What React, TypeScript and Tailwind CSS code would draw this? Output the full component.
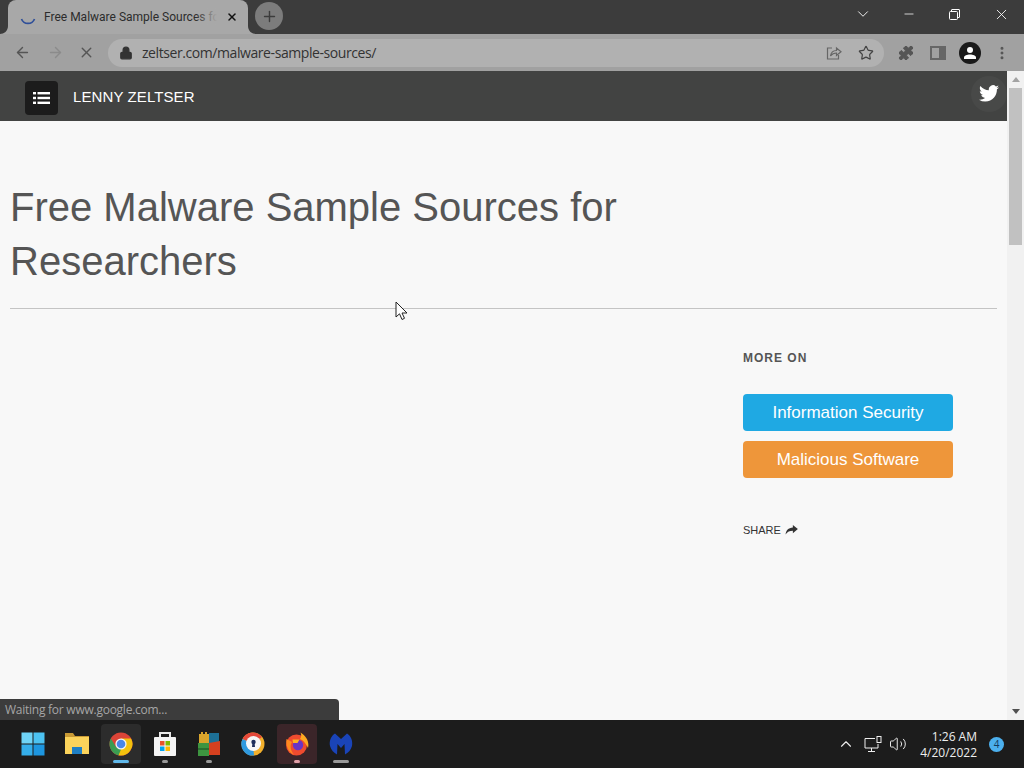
import { ArrowLeft, ArrowRight, X, Plus, ChevronDown, Minus, Lock, Star, Puzzle, MoreVertical, ChevronUp, Volume2 } from 'lucide-react';

function ChromeIcon() {
  return (
    <svg width="24" height="24" viewBox="0 0 24 24">
      <circle cx="12" cy="12" r="11.5" fill="#db4437" />
      <path d="M12 6.400 H22 A11.500 11.500 0 0 1 9.500 23.200 L12 12 Z" fill="#f4c20d" />
      <path d="M7 15 L1.900 6.400 A11.500 11.500 0 0 0 9.500 23.200 L12 17.600 Z" fill="#3a9c52" />
      <circle cx="12" cy="12" r="5.600" fill="#f4f4f4" />
      <circle cx="12" cy="12" r="4.300" fill="#4a86e8" />
    </svg>
  );
}

function WinLogo() {
  return (
    <svg width="24" height="24" viewBox="0 0 24 24">
      <rect x="0.500" y="0.500" width="11" height="11" fill="#6fd4f7" />
      <rect x="12.500" y="0.500" width="11" height="11" fill="#4cc2f1" />
      <rect x="0.500" y="12.500" width="11" height="11" fill="#35aeea" />
      <rect x="12.500" y="12.500" width="11" height="11" fill="#1d96e0" />
    </svg>
  );
}

function FolderIcon() {
  return (
    <svg width="26" height="24" viewBox="0 0 26 24">
      <path d="M1 1 H9 L11 4 H25 V22 H1 Z" fill="#c99a35" />
      <rect x="1" y="5" width="24" height="17" fill="#fbd35b" />
      <rect x="8" y="15" width="10" height="7" fill="#1f7fc4" />
    </svg>
  );
}

function StoreIcon() {
  return (
    <svg width="24" height="26" viewBox="0 0 24 26">
      <path d="M7 7 V2 H17 V7" fill="none" stroke="#e8e8e8" strokeWidth="2" />
      <rect x="1" y="6" width="22" height="19" rx="1" fill="#f4f4f4" />
      <rect x="7" y="10" width="4.500" height="4.500" fill="#e8532b" />
      <rect x="12.500" y="10" width="4.500" height="4.500" fill="#7fba00" />
      <rect x="7" y="15.500" width="4.500" height="4.500" fill="#00a4ef" />
      <rect x="12.500" y="15.500" width="4.500" height="4.500" fill="#ffb900" />
    </svg>
  );
}

function StackedAppIcon() {
  return (
    <svg width="24" height="26" viewBox="0 0 24 26">
      <path d="M2 3 H4 V1 H6 V3 H8 V1 H10 V3 H12 V12 H2 Z" fill="#d9a52c" />
      <rect x="1" y="12" width="11" height="13" fill="#3d9440" />
      <rect x="1" y="17" width="11" height="2" fill="#2a6f31" />
      <rect x="12" y="2" width="10" height="10" fill="#1d7096" />
      <path d="M12 12 L23 10 V24 H12 Z" fill="#d5401f" />
    </svg>
  );
}

function SecureBrowserIcon() {
  return (
    <svg width="24" height="24" viewBox="0 0 24 24">
      <circle cx="12" cy="12" r="11.500" fill="#f2b02c" />
      <path d="M12 12 L1.500 7 A11.500 11.500 0 0 1 21 5 Z" fill="#e5483a" />
      <path d="M12 12 L1.500 7 A11.500 11.500 0 0 0 13 23.500 Z" fill="#2f9ae0" />
      <circle cx="12.500" cy="11.500" r="7.500" fill="#f7f7f7" />
      <circle cx="12.500" cy="10" r="2.200" fill="#1f2f5c" />
      <path d="M11.500 10 H13.500 L14 15 H11 Z" fill="#1f2f5c" />
    </svg>
  );
}

function FirefoxIcon() {
  return (
    <svg width="24" height="24" viewBox="0 0 24 24">
      <circle cx="11.500" cy="13" r="10.500" fill="#ef4b2f" />
      <path d="M15.500 0.500 C21.500 4 24.500 10 23 16 C20.500 10.500 17.500 8 15 7 C16.500 5 16.500 3 15.500 0.500 Z" fill="#ffa921" />
      <path d="M1.500 7 C0.500 13 3 20 9 22.800 C5 18 5 13 7 10 Z" fill="#ff8a1f" />
      <circle cx="13" cy="13" r="5.200" fill="#6b34c4" />
      <path d="M7.500 7.500 H14.500 L12.500 11 H8 Z" fill="#ffb01f" />
    </svg>
  );
}

function MalwarebytesIcon() {
  return (
    <svg width="24" height="22" viewBox="0 0 24 22">
      <path d="M6 0.500 L12 6 L18 0.500 C22 3 24 8 23 13 C22 17 19 20 16 21.500 L15.500 11 L12 15 L8.500 11 L8 21.500 C5 20 2 17 1 13 C0 8 2 3 6 0.500 Z" fill="#1a44b8" />
    </svg>
  );
}

function TwitterIcon() {
  return (
    <svg width="20" height="17" viewBox="0 0 24 20" fill="#fff">
      <path d="M24 2.400c-.9.400-1.800.700-2.800.800 1-.600 1.800-1.600 2.200-2.700-1 .600-2 1-3.100 1.200A4.900 4.900 0 0 0 11.900 6.200C7.800 6 4.200 4 1.700.900c-1.300 2.200-.700 5.100 1.500 6.600-.800 0-1.600-.200-2.200-.600 0 2.300 1.600 4.400 3.900 4.900-.700.200-1.500.200-2.200.100.600 2 2.400 3.400 4.600 3.400A9.900 9.900 0 0 1 0 17.400 13.900 13.900 0 0 0 7.500 19.600c9.100 0 14.300-7.700 14-14.600 1-.700 1.800-1.600 2.500-2.600z" />
    </svg>
  );
}

function TaskItem({ active, barClass, children }: { active?: string; barClass?: string; children: React.ReactNode }) {
  return (
    <div className={`relative flex items-center justify-center w-10 h-10 rounded ${active ?? ''}`}>
      {children}
      {barClass && <span className={`absolute bottom-[1px] h-[3px] rounded-full ${barClass}`} />}
    </div>
  );
}

export default function App() {
  return (
    <div className="relative flex flex-col w-[1024px] h-[768px] overflow-hidden bg-[#f8f8f8] font-['Liberation_Sans',Arial,sans-serif]">
      {/* tab strip */}
      <div className="flex items-start h-[34px] bg-[#3c3c3c] shrink-0 pl-2">
        <div className="relative flex items-center w-[240px] h-[34px] rounded-t-lg bg-[#a8a8a8] pl-3 pr-2">
          <svg width="8" height="8" viewBox="0 0 8 8" className="absolute -left-2 bottom-0" fill="#a8a8a8">
            <path d="M8 0 V8 H0 C4 8 8 5 8 0 Z" />
          </svg>
          <svg width="8" height="8" viewBox="0 0 8 8" className="absolute -right-2 bottom-0" fill="#a8a8a8">
            <path d="M0 0 V8 H8 C4 8 0 5 0 0 Z" />
          </svg>
          <svg width="16" height="16" viewBox="0 0 16 16" className="mt-1 shrink-0">
            <path d="M1.500 8 A7 7 0 0 0 14.500 8" fill="none" stroke="#2f4f99" strokeWidth="1.700" />
          </svg>
          <div className="relative ml-2 w-[173px] overflow-hidden">
            <span className="block whitespace-nowrap text-[12px] text-[#2c2c2c] font-['Roboto',sans-serif]">Free Malware Sample Sources for Researchers</span>
            <div className="absolute right-0 top-0 h-full w-[22px] bg-gradient-to-r from-transparent to-[#a8a8a8]" />
          </div>
          <X className="ml-auto text-[#111] mr-[2px]" size={12} strokeWidth={3} />
        </div>
        <div className="ml-[7px] mt-[2px] flex items-center justify-center w-7 h-7 rounded-full bg-[#7c7c7c]">
          <Plus size={17} className="text-[#3c3c3c]" strokeWidth={2} />
        </div>
        <div className="ml-auto flex items-center h-[28px] text-white">
          <ChevronDown size={18} strokeWidth={1.200} className="mr-[30px]" />
          <Minus size={14} strokeWidth={1.300} className="mr-[33px]" />
          <svg width="11" height="11" viewBox="0 0 11 11" fill="none" stroke="#fff" className="mr-[33px]">
            <rect x="0.500" y="2.500" width="8" height="8" rx="1" />
            <path d="M2.500 2.500 V1 A0.500 0.500 0 0 1 3 0.500 H10 A0.500 0.500 0 0 1 10.500 1 V8 A0.500 0.500 0 0 1 10 8.500 H8.500" />
          </svg>
          <X size={17} strokeWidth={1.200} className="mr-[14px]" />
        </div>
      </div>

      {/* toolbar */}
      <div className="flex items-center h-[37px] bg-[#a1a1a1] shrink-0 pl-[14px] pr-[14px]">
        <ArrowLeft size={17} className="text-[#555]" strokeWidth={2} />
        <ArrowRight size={17} className="ml-[16px] text-[#8b8b8b]" strokeWidth={2} />
        <X size={17} className="ml-[14px] text-[#555]" strokeWidth={2} />
        <div className="ml-[13px] flex items-center h-[28px] w-[777px] rounded-full bg-[#b1b1b1] pl-[11px] pr-[10px]">
          <Lock size={14} className="text-[#333]" fill="#333" strokeWidth={2} />
          <span className="ml-[9px] text-[14px] text-[#333] font-['Open_Sans',sans-serif] tracking-[-0.42px]">zeltser.com/malware-sample-sources/</span>
          <svg width="16" height="16" viewBox="0 0 16 16" fill="none" stroke="#666" strokeWidth="1.200" className="ml-auto mr-[1px]">
            <path d="M6 3 H1.500 V14 H12.500 V10" />
            <path d="M4.500 11 C5 7.500 7.500 5.500 10.500 5.500 V3 L15 6.800 L10.500 10.500 V8 C8 8 6 9 4.500 11 Z" />
          </svg>
          <Star size={16} className="ml-[15px] text-[#444]" strokeWidth={1.800} />
        </div>
        <Puzzle size={16} className="ml-[14px] text-[#555]" fill="#555" strokeWidth={1.500} />
        <div className="ml-[16px] w-[16px] h-[14px] border-2 border-[#666] flex justify-end">
          <div className="w-[5px] bg-[#666]" />
        </div>
        <div className="ml-[13px] flex items-center justify-center w-[22px] h-[22px] rounded-full bg-[#1a1a1a]">
          <svg width="14" height="14" viewBox="0 0 14 14" fill="#fff">
            <circle cx="7" cy="4" r="3" />
            <path d="M1 13 V11.500 C1 9.500 4 8.500 7 8.500 C10 8.500 13 9.500 13 11.500 V13 Z" />
          </svg>
        </div>
        <MoreVertical size={16} className="ml-[13px] text-[#555]" strokeWidth={2.500} />
      </div>

      {/* page + scrollbar */}
      <div className="relative flex flex-1 min-h-0">
        <div className="flex-1 min-w-0">
          <header className="flex items-center h-[50px] bg-[#424342] pl-[25px]">
            <div className="mt-[4px] flex items-center justify-center w-[33px] h-[34px] rounded bg-[#1c1c1c]">
              <svg width="17" height="14" viewBox="0 0 17 14" fill="#fff">
                <rect x="0" y="1" width="3" height="2.400" />
                <rect x="4.500" y="1" width="12.500" height="2.400" />
                <rect x="0" y="5.800" width="3" height="2.400" />
                <rect x="4.500" y="5.800" width="12.500" height="2.400" />
                <rect x="0" y="10.600" width="3" height="2.400" />
                <rect x="4.500" y="10.600" width="12.500" height="2.400" />
              </svg>
            </div>
            <span className="ml-[15px] mt-[2px] text-[15px] text-white tracking-[0.1px]">LENNY ZELTSER</span>
            <div className="ml-auto mb-[5px] flex items-center justify-center w-[36px] h-[36px] rounded-full bg-[#484948]">
              <TwitterIcon />
            </div>
          </header>

          <main className="px-[10px] pt-[59px]">
            <h1 className="text-[40px] leading-[54px] font-normal text-[#555] w-[700px]">Free Malware Sample Sources for Researchers</h1>
            <hr className="mt-[20px] border-[#c4c4c4]" />
            <div className="mt-[42px] ml-[733px] w-[210px]">
              <p className="text-[12px] leading-[14px] font-bold tracking-[1px] text-[#555]">MORE ON</p>
              <a className="mt-[29px] flex items-center justify-center h-[37px] rounded-sm bg-[#1fa9e3] text-[17px] text-white">Information Security</a>
              <a className="mt-[10px] flex items-center justify-center h-[37px] rounded-sm bg-[#ee963a] text-[17px] text-white">Malicious Software</a>
              <div className="mt-[44px] flex items-center text-[11px] text-[#333]">
                SHARE
                <svg width="13" height="10" viewBox="0 0 14 11" className="ml-[4px]" fill="#333">
                  <path d="M8.500 0 L14 4.500 L8.500 9 V6.300 C5 6.300 2.500 7.300 0.500 10.500 C1 6 3.500 3 8.500 2.700 Z" />
                </svg>
              </div>
            </div>
          </main>
        </div>

        {/* scrollbar */}
        <div className="flex flex-col items-center w-[17px] bg-[#f1f1f1] shrink-0">
          <div className="flex items-center justify-center h-[17px]">
            <div className="w-0 h-0 border-x-[4px] border-x-transparent border-b-[5px] border-b-[#a3a3a3]" />
          </div>
          <div className="w-[13px] h-[157px] bg-[#c1c1c1]" />
          <div className="mt-auto flex items-center justify-center h-[17px]">
            <div className="w-0 h-0 border-x-[4px] border-x-transparent border-t-[5px] border-t-[#505050]" />
          </div>
        </div>

        {/* status bubble */}
        <div className="absolute left-0 bottom-0 flex items-center w-[339px] h-[21px] rounded-tr bg-[#3c3c3c] pl-[5px] text-[12px] text-[#a6a6a6] font-['Open_Sans',sans-serif] tracking-[-0.25px]">
          Waiting for www.google.com...
        </div>

        {/* mouse cursor */}
        <svg width="14" height="21" viewBox="0 0 14 21" className="absolute left-[395px] top-[230px]">
          <path d="M1 1 V16 L4.500 12.800 L7 18.500 L9.500 17.300 L7 12 H12 Z" fill="#fff" stroke="#222" strokeWidth="1" strokeLinejoin="round" />
        </svg>
      </div>

      {/* taskbar */}
      <div className="flex items-center h-[48px] bg-[#1c1c1c] shrink-0 pl-[13px] pr-[20px]">
        <div className="flex items-center gap-[4px]">
          <TaskItem><WinLogo /></TaskItem>
          <TaskItem><FolderIcon /></TaskItem>
          <TaskItem active="bg-[#2c2c2c]" barClass="w-[16px] bg-[#60b8ea]"><ChromeIcon /></TaskItem>
          <TaskItem barClass="w-[6px] bg-[#9a9a9a]"><StoreIcon /></TaskItem>
          <TaskItem barClass="w-[6px] bg-[#9a9a9a]"><StackedAppIcon /></TaskItem>
          <TaskItem><SecureBrowserIcon /></TaskItem>
          <TaskItem active="bg-[#3b2529]" barClass="w-[6px] bg-[#e0a0a8]"><FirefoxIcon /></TaskItem>
          <TaskItem barClass="w-[16px] bg-[#9a9a9a]"><MalwarebytesIcon /></TaskItem>
        </div>
        <div className="ml-auto flex items-center text-white">
          <ChevronUp size={18} strokeWidth={1.500} className="text-[#eee]" />
          <svg width="18" height="17" viewBox="0 0 18 17" fill="none" stroke="#eee" strokeWidth="1" className="ml-[9px]">
            <path d="M11 2.500 H1 V12 H14 V8" />
            <path d="M7.500 12 V15 M4 15.500 H11" />
            <rect x="13" y="0.500" width="4" height="6" />
          </svg>
          <Volume2 size={18} strokeWidth={1.300} className="ml-[7px] text-[#eee]" />
          <div className="ml-[10px] mt-[2px] w-[60px] text-right text-[12px] leading-[16px] text-[#eee] font-['Open_Sans',sans-serif]">
            <div>1:26 AM</div>
            <div>4/20/2022</div>
          </div>
          <div className="ml-[12px] flex items-center justify-center w-[15px] h-[15px] rounded-full bg-[#4cb0ee] text-[10px] text-[#143a5c] font-['Open_Sans',sans-serif]">4</div>
        </div>
      </div>
    </div>
  );
}
